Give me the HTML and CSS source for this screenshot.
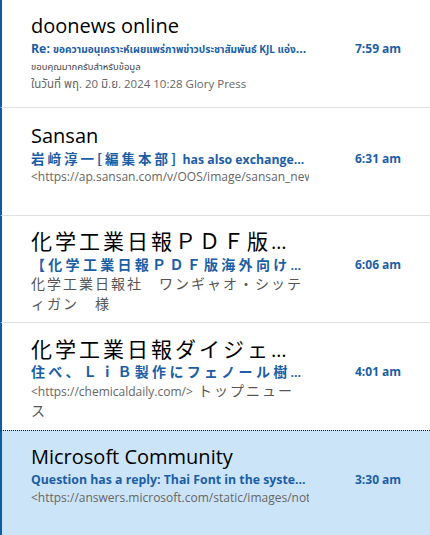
FILE: index.html
```html
<!DOCTYPE html>
<html lang="en">
<head>
<meta charset="utf-8">
<title>Inbox</title>
<link rel="stylesheet" href="styles.css">
</head>
<body>
<div class="list">
  <div class="item">
    <div class="from">doonews online</div>
    <div class="subject">Re: <span class="thai">ขอความอนุเคราะห์เผยแพร่ภาพข่าวประชาสัมพันธ์ KJL แอ่งน้ำสาธารณะ</span></div>
    <div class="time">7:59 am</div>
    <div class="preview">
      <div class="thai-small">ขอบคุณมากครับสำหรับข้อมูล</div>
      <div class="pline">ในวันที่ พฤ. 20 มิ.ย. 2024 10:28 Glory Press</div>
    </div>
  </div>
  <div class="item">
    <div class="from">Sansan</div>
    <div class="subject"><span class="cj">岩﨑淳一[編集本部]</span> has also exchanged contact info</div>
    <div class="time">6:31 am</div>
    <div class="preview nowrap">&lt;https://ap.sansan.com/v/OOS/image/sansan_news_logo.png&gt;</div>
  </div>
  <div class="item">
    <div class="from"><span class="cjn">化学工業日報ＰＤＦ版海外向け</span></div>
    <div class="subject"><span class="cj wide">【化学工業日報ＰＤＦ版海外向け】配信</span></div>
    <div class="time">6:06 am</div>
    <div class="preview wrap"><span class="cp">化学工業日報社　ワンギャオ・シッティガン　様</span></div>
  </div>
  <div class="item">
    <div class="from"><span class="cjn">化学工業日報ダイジェスト</span></div>
    <div class="subject"><span class="cj wide">住べ、ＬｉＢ製作にフェノール樹脂採用</span></div>
    <div class="time">4:01 am</div>
    <div class="preview wrap">&lt;https://chemicaldaily.com/&gt;<span class="cp"> トップニュース</span></div>
  </div>
  <div class="item selected">
    <div class="from">Microsoft Community</div>
    <div class="subject">Question has a reply: Thai Font in the system for Outlook</div>
    <div class="time">3:30 am</div>
    <div class="preview nowrap">&lt;https://answers.microsoft.com/static/images/notification.png&gt;</div>
  </div>
</div>
</body>
</html>
```
FILE: styles.css
```css
html, body {
  margin: 0;
  padding: 0;
  background: #ffffff;
}
body {
  font-family: "Open Sans", "Noto Sans Thai", "Noto Sans CJK JP", sans-serif;
  color: #000;
  height: 535px;
  overflow: hidden;
}
.list {
  display: flex;
  flex-direction: column;
}
.item {
  box-sizing: border-box;
  height: 107.75px;
  flex: none;
  border-left: 2px solid #0f5ba4;
  border-bottom: 1px solid #e1e1e1;
  padding: 11px 0 0 29px;
  display: grid;
  grid-template-columns: 278px auto;
  grid-template-rows: 29px 18px auto;
  column-gap: 46px;
  align-items: center;
}
.item:nth-child(2) {
  padding-top: 13px;
}
.item.selected {
  background: #cce4f7;
  border-top: 1px dotted #1a1a1a;
  border-bottom: none;
  margin-top: -1px;
  height: 110px;
}
.from {
  grid-column: 1;
  grid-row: 1;
  font-size: 20px;
  line-height: 29px;
  white-space: nowrap;
  overflow: hidden;
  text-overflow: ellipsis;
  color: #000;
}
.cjn {
  font-family: "Noto Sans CJK JP", sans-serif;
  font-size: 21px;
  letter-spacing: 3px;
}
.subject {
  grid-column: 1;
  grid-row: 2;
  font-size: 12.3px;
  font-weight: 700;
  line-height: 18px;
  color: #1b5ea6;
  white-space: nowrap;
  overflow: hidden;
  text-overflow: ellipsis;
}
.cj {
  font-family: "Noto Sans CJK JP", sans-serif;
  font-size: 13.5px;
  letter-spacing: 3px;
}
.cj.wide {
  font-size: 14px;
  letter-spacing: 3.3px;
}
.thai {
  font-size: 10.1px;
}
.time {
  grid-column: 2;
  grid-row: 2;
  font-size: 12px;
  font-weight: 700;
  line-height: 18px;
  color: #1b5ea6;
  white-space: nowrap;
}
.preview {
  grid-column: 1;
  grid-row: 3;
  align-self: start;
  font-size: 12px;
  line-height: 18px;
  color: #666;
  overflow: hidden;
}
.preview.nowrap {
  white-space: nowrap;
}
.preview.wrap {
  width: 274px;
}
.thai-small {
  font-size: 9.5px;
  line-height: 18px;
  color: #444;
}
.pline {
  font-size: 11.5px;
  line-height: 15px;
}
.cp {
  font-family: "Noto Sans CJK JP", sans-serif;
  font-size: 14px;
  letter-spacing: 2px;
  color: #555;
}
```
